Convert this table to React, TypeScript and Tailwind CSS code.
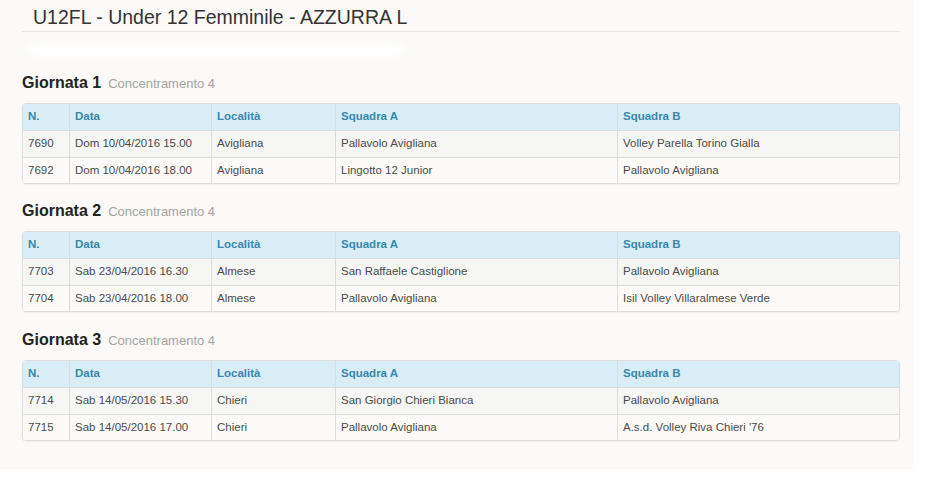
import React from "react";

type Row = { n: string; data: string; loc: string; a: string; b: string };

const sections: { title: string; rows: Row[] }[] = [
  {
    title: "Giornata 1",
    rows: [
      { n: "7690", data: "Dom 10/04/2016 15.00", loc: "Avigliana", a: "Pallavolo Avigliana", b: "Volley Parella Torino Gialla" },
      { n: "7692", data: "Dom 10/04/2016 18.00", loc: "Avigliana", a: "Lingotto 12 Junior", b: "Pallavolo Avigliana" },
    ],
  },
  {
    title: "Giornata 2",
    rows: [
      { n: "7703", data: "Sab 23/04/2016 16.30", loc: "Almese", a: "San Raffaele Castiglione", b: "Pallavolo Avigliana" },
      { n: "7704", data: "Sab 23/04/2016 18.00", loc: "Almese", a: "Pallavolo Avigliana", b: "Isil Volley Villaralmese Verde" },
    ],
  },
  {
    title: "Giornata 3",
    rows: [
      { n: "7714", data: "Sab 14/05/2016 15.30", loc: "Chieri", a: "San Giorgio Chieri Bianca", b: "Pallavolo Avigliana" },
      { n: "7715", data: "Sab 14/05/2016 17.00", loc: "Chieri", a: "Pallavolo Avigliana", b: "A.s.d. Volley Riva Chieri '76" },
    ],
  },
];

const grid = "grid grid-cols-[46px_142px_124px_282px_1fr]";

function Cell({ children, first, head }: { children: React.ReactNode; first?: boolean; head?: boolean }) {
  return (
    <div
      className={
        "flex items-center pl-[5px] whitespace-nowrap overflow-hidden " +
        (first ? "" : "border-l border-[#dddddd] ") +
        (head ? "font-bold text-[#3a87ad]" : "text-[#4a4a4a]")
      }
    >
      {children}
    </div>
  );
}

function Table({ rows }: { rows: Row[] }) {
  return (
    <div className="w-[878px] border border-[#dddddd] rounded-[4px] overflow-hidden shadow-[0_1px_2px_rgba(0,0,0,0.05)] text-[11.5px] leading-none">
      <div className={grid + " h-[27px] bg-[#d9edf7] border-b border-[#dddddd]"}>
        <Cell first head>N.</Cell>
        <Cell head>Data</Cell>
        <Cell head>Località</Cell>
        <Cell head>Squadra A</Cell>
        <Cell head>Squadra B</Cell>
      </div>
      {rows.map((r, i) => (
        <div
          key={r.n}
          className={
            grid +
            " " +
            (i === 0 ? "h-[27px] bg-[#f6f6f5] border-b border-[#dddddd]" : "h-[25px] bg-[#fcfbf9]")
          }
        >
          <Cell first>{r.n}</Cell>
          <Cell>{r.data}</Cell>
          <Cell>{r.loc}</Cell>
          <Cell>{r.a}</Cell>
          <Cell>{r.b}</Cell>
        </div>
      ))}
    </div>
  );
}

export default function App() {
  return (
    <div className="w-[928px] h-[480px] bg-white" style={{ fontFamily: '"Liberation Sans", Arial, sans-serif' }}>
      <div className="w-[913px] h-[469px] bg-[#fbfaf8] pt-[3px]">
        <div className="mx-[22px] w-[878px]">
          <div className="pl-[11px] text-[19.5px] leading-[28px] text-[#333333] border-b border-[#e6e6e6]">
            U12FL - Under 12 Femminile - AZZURRA L
          </div>
          <div className="mt-[12px] ml-[4px] w-[380px] h-[12px] bg-white rounded-full blur-[3px]" />
          {sections.map((s, i) => (
            <div key={s.title} className={i === 0 ? "mt-[17px]" : i === 1 ? "mt-[17px]" : "mt-[18px]"}>
              <div className="h-[20px] leading-[20px] flex items-baseline">
                <span className="text-[16px] font-bold text-[#222222]">{s.title}</span>
                <span className="ml-[7px] text-[13px] text-[#a3a3a3]">Concentramento 4</span>
              </div>
              <div className="mt-[10px]">
                <Table rows={s.rows} />
              </div>
            </div>
          ))}
        </div>
      </div>
    </div>
  );
}
